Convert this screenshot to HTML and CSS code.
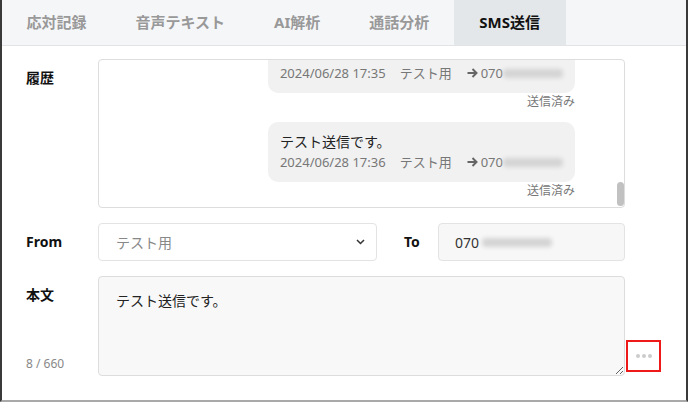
FILE: index.html
```html
<!DOCTYPE html>
<html lang="ja">
<head>
  <meta charset="UTF-8">
  <title>SMS送信</title>
  <link rel="stylesheet" href="styles.css">
</head>
<body>
  <div class="panel">
    <nav class="tabs">
      <div class="tab">応対記録</div>
      <div class="tab">音声テキスト</div>
      <div class="tab">AI解析</div>
      <div class="tab">通話分析</div>
      <div class="tab active">SMS送信</div>
    </nav>

    <div class="form">
      <div class="row">
        <div class="label">履歴</div>
        <div class="history-wrap">
          <div class="history">
            <div class="history-inner">
              <div class="msg">
                <div class="bubble">
                  <div class="text">テスト送信です。</div>
                  <div class="meta"><span>2024/06/28 17:35</span><span>テスト用</span><span class="to"><svg width="11" height="10" viewBox="0 0 11 10"><path d="M0.5 5H9.5M5.5 1L9.5 5L5.5 9" fill="none" stroke="#666" stroke-width="2"/></svg>070<span class="blur"></span></span></div>
                </div>
                <div class="status">送信済み</div>
              </div>
              <div class="msg">
                <div class="bubble">
                  <div class="text">テスト送信です。</div>
                  <div class="meta"><span>2024/06/28 17:36</span><span>テスト用</span><span class="to"><svg width="11" height="10" viewBox="0 0 11 10"><path d="M0.5 5H9.5M5.5 1L9.5 5L5.5 9" fill="none" stroke="#666" stroke-width="2"/></svg>070<span class="blur"></span></span></div>
                </div>
                <div class="status">送信済み</div>
              </div>
            </div>
          </div>
          <div class="thumb"></div>
        </div>
      </div>

      <div class="row">
        <div class="label">From</div>
        <div class="fields">
          <div class="select">
            <span>テスト用</span>
            <svg width="9" height="6" viewBox="0 0 9 6"><path d="M1 1L4.5 4.5L8 1" fill="none" stroke="#333" stroke-width="1.5"/></svg>
          </div>
          <div class="label label-to">To</div>
          <div class="input">070<span class="blur wide"></span></div>
        </div>
      </div>

      <div class="row">
        <div class="label-col">
          <div class="label">本文</div>
          <div class="counter">8 / 660</div>
        </div>
        <textarea class="body">テスト送信です。</textarea>
        <button class="more"><i></i><i></i><i></i></button>
      </div>
    </div>
  </div>
</body>
</html>
```

FILE: styles.css
```css
body {
  margin: 0;
  font-family: "Noto Sans", "Noto Sans CJK JP", sans-serif;
  background: #fff;
  color: #111;
}

.panel {
  width: 688px;
  height: 402px;
  box-sizing: border-box;
  border-left: 2px solid #3a3a3a;
  border-right: 2px solid #3a3a3a;
  border-bottom: 2px solid #a9a9a9;
  overflow: hidden;
}

/* tabs */
.tabs {
  display: flex;
  height: 46px;
  box-sizing: border-box;
  background: #f5f6f8;
  border-bottom: 1px solid #e1e3e6;
}

.tab {
  padding: 0 24.5px;
  line-height: 45px;
  font-size: 15px;
  font-weight: bold;
  color: #999;
}

.tab.active {
  background: #e3e7ea;
  color: #111;
  padding: 0 25.5px;
}

/* form */
.form {
  padding: 13px 0 0 24px;
}

.row {
  display: grid;
  grid-template-columns: 72px 527px auto;
  margin-bottom: 15px;
}

.label {
  padding-top: 9px;
  line-height: 20px;
  font-size: 14px;
  font-weight: bold;
  color: #111;
}

/* history */
.history-wrap {
  position: relative;
}

.history {
  height: 149px;
  box-sizing: border-box;
  border: 1px solid #ddd;
  border-radius: 4px;
  overflow: hidden;
  display: flex;
  flex-direction: column-reverse;
}

/* scrollbar thumb, pinned to the bottom */
.thumb {
  position: absolute;
  right: 1px;
  bottom: 2px;
  width: 7px;
  height: 24px;
  background: #c1c1c1;
  border-radius: 4px;
}

.history-inner {
  padding: 0 49px 7px 12px;
}

.msg {
  display: flex;
  flex-direction: column;
  align-items: flex-end;
  margin-bottom: 11px;
}
.msg:last-child {
  margin-bottom: 0;
}

.bubble {
  background: #f1f1f1;
  border-radius: 10px;
  padding: 10px 12px;
}

.text {
  font-size: 14px;
  line-height: 20px;
  color: #222;
}

.meta {
  display: flex;
  align-items: center;
  gap: 14px;
  font-size: 13px;
  line-height: 20px;
  color: #777;
}

.to {
  display: flex;
  align-items: center;
  margin-left: 1px;
}
.to svg {
  margin-right: 3px;
}

.blur {
  display: inline-block;
  width: 60px;
  height: 9px;
  background: #d4d4d4;
  border-radius: 4px;
  filter: blur(2px);
}
.blur.wide {
  width: 70px;
  margin-left: 3px;
}

.status {
  font-size: 12px;
  line-height: 18px;
  color: #777;
}

/* from / to */
.fields {
  display: flex;
}

.select {
  flex: 0 0 279px;
  height: 38px;
  box-sizing: border-box;
  border: 1px solid #e3e3e3;
  border-radius: 4px;
  background: #fff;
  padding: 0 11px 0 17px;
  display: flex;
  align-items: center;
  justify-content: space-between;
  font-size: 14px;
  color: #888;
}

.label-to {
  width: 61px;
  box-sizing: border-box;
  padding-left: 27px;
}

.input {
  flex: 1;
  height: 38px;
  box-sizing: border-box;
  border: 1px solid #e3e3e3;
  border-radius: 4px;
  background: #f7f7f7;
  padding: 0 16px;
  display: flex;
  align-items: center;
  font-size: 14px;
  color: #333;
}

/* body */
.label-col {
  display: flex;
  flex-direction: column;
  justify-content: space-between;
}

.counter {
  font-size: 12px;
  line-height: 18px;
  color: #888;
  padding-bottom: 3px;
}

.body {
  height: 100px;
  box-sizing: border-box;
  margin: 0;
  border: 1px solid #ddd;
  border-radius: 4px;
  background: #f8f8f8;
  padding: 14px 17px;
  font-family: inherit;
  font-size: 14px;
  line-height: 20px;
  color: #222;
  outline: none;
}

.more {
  align-self: end;
  width: 35px;
  height: 32px;
  margin: 0 0 4px 1px;
  padding: 0;
  box-sizing: border-box;
  border: 2px solid #ee1a1a;
  background: #fff;
  display: flex;
  align-items: center;
  justify-content: center;
  gap: 2px;
}

.more i {
  width: 4px;
  height: 4px;
  border-radius: 50%;
  background: #ccc;
}
```
